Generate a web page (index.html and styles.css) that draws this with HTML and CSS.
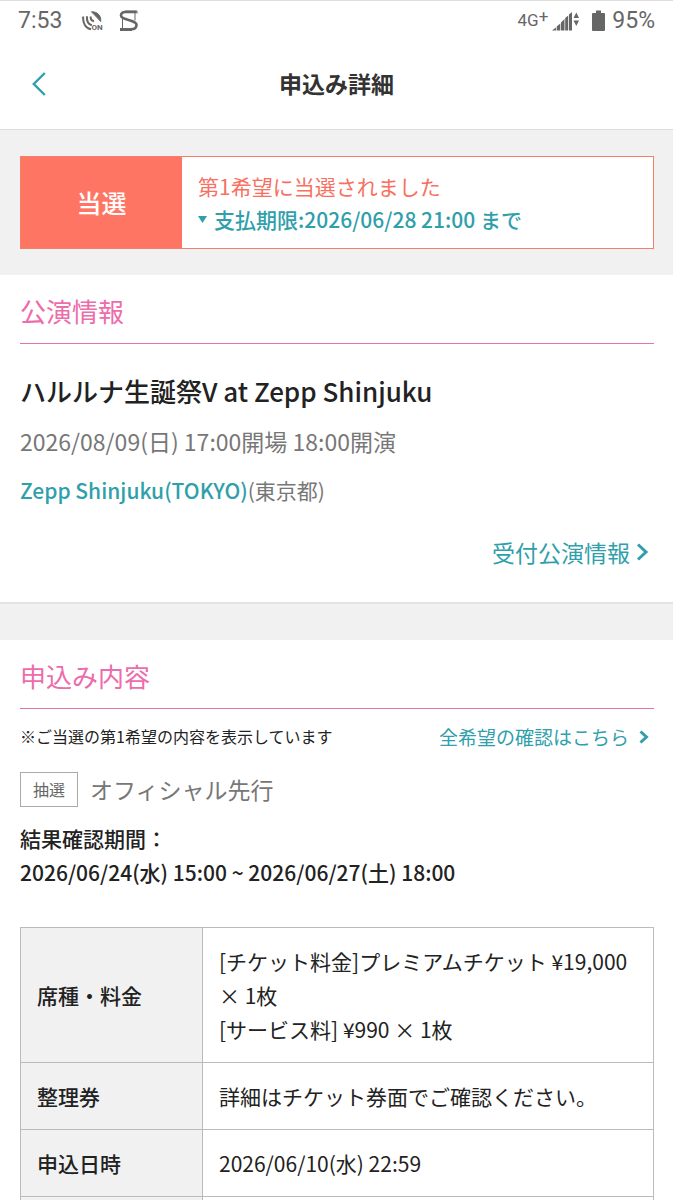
FILE: index.html
```html
<!DOCTYPE html>
<html lang="ja">
<head>
<meta charset="utf-8">
<meta name="viewport" content="width=device-width, initial-scale=1">
<title>申込み詳細</title>
<link rel="stylesheet" href="styles.css">
</head>
<body>
<div class="screen">
  <div class="status-bar">
    <div class="status-group status-left">
      <span class="status-time">7:53</span>
      <svg class="status-radar" width="22" height="20" viewBox="0 0 22 20" fill="none" stroke="#666" aria-hidden="true">
        <path d="M9.500 0.800C15 0.500 19.500 4.500 18.700 10.500L15.500 7Z" fill="#666" stroke-width="1"/>
        <path d="M1.200 5.500C0.500 12.500 4 17.500 9 18.300" stroke-width="2"/>
        <path d="M4.900 5.300C4.600 10 6.500 13.300 9.800 14.300" stroke-width="2"/>
        <path d="M8.600 5.500C8.500 8 9.700 9.800 12 10.300" stroke-width="2"/>
        <text class="radar-label" x="9.500" y="19">ON</text>
      </svg>
      <svg class="status-s" width="20" height="22" viewBox="0 0 20 22" fill="none" stroke="#666" aria-hidden="true">
        <path d="M17.500 2H6C3.500 2 2 3.500 2 5.500C2 10.500 17.500 9.500 17.500 15C17.500 18.500 14.500 19.200 12 19.200H1" stroke-width="2.600"/>
        <path d="M3.500 9V18.500M16 3V10.500M1 20.500H13M6 1H18V3.500" stroke-width="1"/>
      </svg>
    </div>
    <div class="status-group">
      <span class="status-net">4G<sup>+</sup></span>
      <svg class="status-signal" width="28" height="20" viewBox="0 0 28 20" fill="#666" aria-hidden="true">
        <path d="M0 19.500L4 16.500V19.500ZM4.700 15.500L8.300 12.500V19.500H4.700ZM9 11.500L12.500 8V19.500H9ZM13.200 7L16.200 4.500V19.500H13.200ZM17 3.500L20 1V19.500H17Z"/>
        <path d="M21.500 7L24.300 1.500L27 7ZM21.500 9.500H27L24.300 15Z"/>
      </svg>
      <svg class="status-battery" width="13" height="21" viewBox="0 0 13 21" fill="#666" aria-hidden="true">
        <path d="M4 0.500H9V3H12Q13 3 13 4V20Q13 21 12 21H1Q0 21 0 20V4Q0 3 1 3H4Z"/>
      </svg>
      <span>95%</span>
    </div>
  </div>

  <header class="page-header">
    <a class="back" href="#" aria-label="戻る">
      <svg width="14" height="24" viewBox="0 0 14 24" fill="none" stroke="#2f9fab" stroke-width="2.400" aria-hidden="true"><path d="M12.800 1L1.800 12L12.800 23"/></svg>
    </a>
    <h1 class="page-title">申込み詳細</h1>
  </header>

  <main>
    <section class="result-area">
      <div class="result">
        <strong class="result-status">当選</strong>
        <div class="result-body">
          <p class="result-message">第1希望に当選されました</p>
          <a class="deadline" href="#details">
            <svg width="9" height="7" viewBox="0 0 9 7" fill="#2f9fab" aria-hidden="true"><path d="M0 0H9L4.500 7Z"/></svg>
            <span>支払期限:2026/06/28 21:00 まで</span>
          </a>
        </div>
      </div>
    </section>

    <section class="panel event">
      <h2 class="section-title">公演情報</h2>
      <h3 class="event-name">ハルルナ生誕祭V at Zepp Shinjuku</h3>
      <p class="event-date">2026/08/09(日) 17:00開場 18:00開演</p>
      <p class="event-venue"><a class="venue-link" href="#">Zepp Shinjuku(TOKYO)</a>(東京都)</p>
      <a class="event-link" href="#">受付公演情報
        <svg width="13" height="18" viewBox="0 0 13 18" fill="none" stroke="#2f9fab" stroke-width="3" aria-hidden="true"><path d="M2 1.500L10 9L2 16.500"/></svg>
      </a>
    </section>

    <section class="panel application" id="details">
      <h2 class="section-title">申込み内容</h2>
      <div class="note-row">
        <p class="note">※ご当選の第1希望の内容を表示しています</p>
        <a class="note-link" href="#">全希望の確認はこちら
          <svg width="10" height="14" viewBox="0 0 10 14" fill="none" stroke="#2f9fab" stroke-width="3" aria-hidden="true"><path d="M1.500 1.500L7.500 7L1.500 12.500"/></svg>
        </a>
      </div>
      <div class="sale">
        <span class="sale-badge">抽選</span>
        <span class="sale-name">オフィシャル先行</span>
      </div>
      <p class="period">結果確認期間：<br>2026/06/24(水) 15:00 ~ 2026/06/27(土) 18:00</p>
      <table class="details">
        <tbody>
          <tr><th scope="row">席種・料金</th><td>[チケット料金]プレミアムチケット ¥19,000 × 1枚<br>[サービス料] ¥990 × 1枚</td></tr>
          <tr><th scope="row">整理券</th><td>詳細はチケット券面でご確認ください。</td></tr>
          <tr><th scope="row">申込日時</th><td>2026/06/10(水) 22:59</td></tr>
          <tr class="next-row"><th></th><td></td></tr>
        </tbody>
      </table>
    </section>
  </main>
</div>
</body>
</html>
```
FILE: styles.css
```css
* { box-sizing: border-box; }
body, h1, h2, h3, p { margin: 0; }
body {
  background: #f1f1f1;
  color: #222;
  font-family: "Noto Sans CJK JP", sans-serif;
  font-size: 21px;
  line-height: 33px;
}
a { color: #2f9fab; text-decoration: none; }
svg { display: block; flex: none; }
.screen { height: 100vh; overflow: hidden; }

.status-bar {
  display: flex;
  justify-content: space-between;
  height: 40px;
  padding: 0 18px;
  border-top: 1px solid #ddd;
  background: #fff;
  color: #666;
  font-family: Roboto, sans-serif;
  font-size: 23px;
}
.status-group { display: flex; align-items: center; }
.status-left { gap: 15px; }
.status-time { margin-right: 5px; }
.radar-label { fill: #666; stroke: none; font-family: Roboto, sans-serif; font-size: 8px; font-weight: 700; }
.status-net { font-size: 17px; }
.status-net sup { font-size: 17px; line-height: 0; vertical-align: 4px; }
.status-signal { margin: 0 12px 0 4px; }
.status-battery { margin-right: 7px; }

.page-header {
  display: grid;
  grid-template-columns: 48px 1fr 48px;
  align-items: center;
  height: 90px;
  padding: 0 20px 2px;
  border-bottom: 1px solid #ddd;
  background: #fff;
}
.back { padding-left: 12px; }
.page-title { color: #333; font-size: 23px; font-weight: 700; text-align: center; }

.result-area { padding: 26px 19px 26px 20px; }
.result {
  display: flex;
  border: 1px solid #f47f6c;
  background: #fff;
}
.result-status {
  display: flex;
  align-items: center;
  justify-content: center;
  width: 161px;
  background: #ff7563;
  color: #fff;
  font-size: 25px;
  font-weight: 500;
}
.result-body { flex: 1; padding: 13px 16px 12px; }
.result-message { color: #f8705f; }
.deadline { display: flex; align-items: center; gap: 7px; font-weight: 500; }

.panel { padding: 17px 19px 0 20px; background: #fff; }
.section-title {
  padding-bottom: 13px;
  border-bottom: 1px solid #e673ac;
  color: #ed6cab;
  font-size: 26px;
  font-weight: 400;
  line-height: 38px;
}

.event { padding-bottom: 32px; border-bottom: 2px solid #e3e3e3; }
.event-name { padding-top: 27px; font-size: 26px; font-weight: 500; line-height: 40px; }
.event-date { padding-top: 12px; color: #777; font-size: 23px; line-height: 36px; }
.event-venue { padding-top: 15px; color: #777; }
.venue-link { font-weight: 500; }
.event-link {
  display: flex;
  align-items: center;
  justify-content: flex-end;
  gap: 6px;
  padding: 27px 5px 0 0;
  font-size: 23px;
  line-height: 36px;
}

.application { margin-top: 36px; }
.note-row { display: flex; align-items: center; justify-content: space-between; padding-top: 11px; }
.note { font-size: 16px; }
.note-link { display: flex; align-items: center; gap: 10px; padding-right: 5px; font-size: 19px; }
.sale { display: flex; align-items: center; gap: 12px; padding-top: 18px; }
.sale-badge {
  padding: 0 12px;
  border: 1px solid #aaa;
  color: #666;
  font-size: 16px;
}
.sale-name { color: #777; font-size: 23px; line-height: 36px; }
.period { padding: 14px 0 38px; font-weight: 500; line-height: 34px; }

.details { width: 100%; border-collapse: collapse; line-height: 34px; }
.details th, .details td {
  padding: 16px;
  border: 1px solid #bbb;
  text-align: left;
}
.details th { width: 182px; background: #f1f1f1; font-weight: 500; }
.details .next-row td { height: 67px; }
```
